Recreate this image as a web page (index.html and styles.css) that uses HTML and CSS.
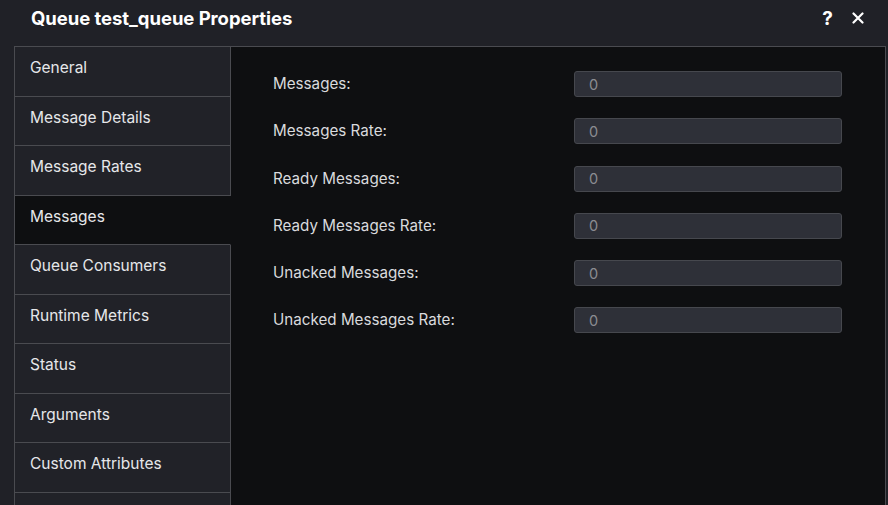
FILE: index.html
```html
<!DOCTYPE html>
<html>
<head>
<meta charset="utf-8">
<link rel="stylesheet" href="styles.css">
</head>
<body>
<div class="dialog">
  <div class="header">
    <div class="title">Queue test_queue Properties</div>
    <div class="actions">
      <span class="help">?</span>
      <svg class="close" width="12" height="12" viewBox="0 0 12 12"><path d="M1.5 1.5 L10.5 10.5 M10.5 1.5 L1.5 10.5" stroke="#ffffff" stroke-width="2.2" stroke-linecap="round"/></svg>
    </div>
  </div>
  <div class="panel">
    <ul class="nav">
      <li class="nav-item">General</li>
      <li class="nav-item">Message Details</li>
      <li class="nav-item">Message Rates</li>
      <li class="nav-item active">Messages</li>
      <li class="nav-item">Queue Consumers</li>
      <li class="nav-item">Runtime Metrics</li>
      <li class="nav-item">Status</li>
      <li class="nav-item">Arguments</li>
      <li class="nav-item">Custom Attributes</li>
      <li class="nav-item">&nbsp;</li>
    </ul>
    <div class="content">
      <div class="row"><label>Messages:</label><div class="field">0</div></div>
      <div class="row"><label>Messages Rate:</label><div class="field">0</div></div>
      <div class="row"><label>Ready Messages:</label><div class="field">0</div></div>
      <div class="row"><label>Ready Messages Rate:</label><div class="field">0</div></div>
      <div class="row"><label>Unacked Messages:</label><div class="field">0</div></div>
      <div class="row"><label>Unacked Messages Rate:</label><div class="field">0</div></div>
    </div>
  </div>
</div>
</body>
</html>
```

FILE: styles.css
```css
html, body {
  margin: 0;
  padding: 0;
  height: 100%;
  overflow: hidden;
}
body {
  background: #202127;
  font-family: "Inter", "DejaVu Sans", sans-serif;
  color: #e8e9ec;
}
.dialog {
  display: flex;
  flex-direction: column;
  height: 100%;
}
.header {
  height: 46px;
  flex: none;
  display: flex;
  align-items: center;
  justify-content: space-between;
  padding: 0 24px 0 31px;
}
.title {
  font-size: 18.5px;
  font-weight: 700;
  color: #ffffff;
  letter-spacing: -0.05px;
  margin-top: -10px;
}
.actions {
  display: flex;
  align-items: center;
  gap: 19px;
  margin-top: -10px;
}
.help {
  font-size: 19px;
  font-weight: 700;
  color: #ffffff;
}
.close {
  display: block;
}
.panel {
  flex: 1;
  margin: 0 2px 0 14px;
  border: 1px solid #4a4b50;
  border-bottom: none;
  background: #0e0f11;
  display: flex;
  align-items: flex-start;
}
.nav {
  list-style: none;
  margin: 0;
  padding: 0;
  width: 216px;
  flex: none;
}
.nav-item {
  height: 49.5px;
  box-sizing: border-box;
  padding: 11px 0 0 15px;
  font-size: 15.5px;
  color: #e6e7ea;
  background: #212228;
  border-right: 1px solid #4a4b50;
  border-bottom: 1px solid #4a4b50;
}
.nav-item.active {
  background: #0e0f11;
  border-right-color: #0e0f11;
}
.content {
  flex: 1;
  padding: 24px 43px 0 42px;
  display: flex;
  flex-direction: column;
  gap: 21.3px;
}
.row {
  display: flex;
  align-items: center;
  height: 26px;
}
.row label {
  width: 301px;
  flex: none;
  font-size: 15.2px;
  color: #d9dadd;
  padding-bottom: 1px;
}
.field {
  width: 268px;
  height: 26px;
  box-sizing: border-box;
  background: #2e3038;
  border: 1px solid #46484e;
  border-radius: 3px;
  padding: 0 0 0 14px;
  display: flex;
  align-items: center;
  font-size: 14.5px;
  color: #8b8c91;
}
```
